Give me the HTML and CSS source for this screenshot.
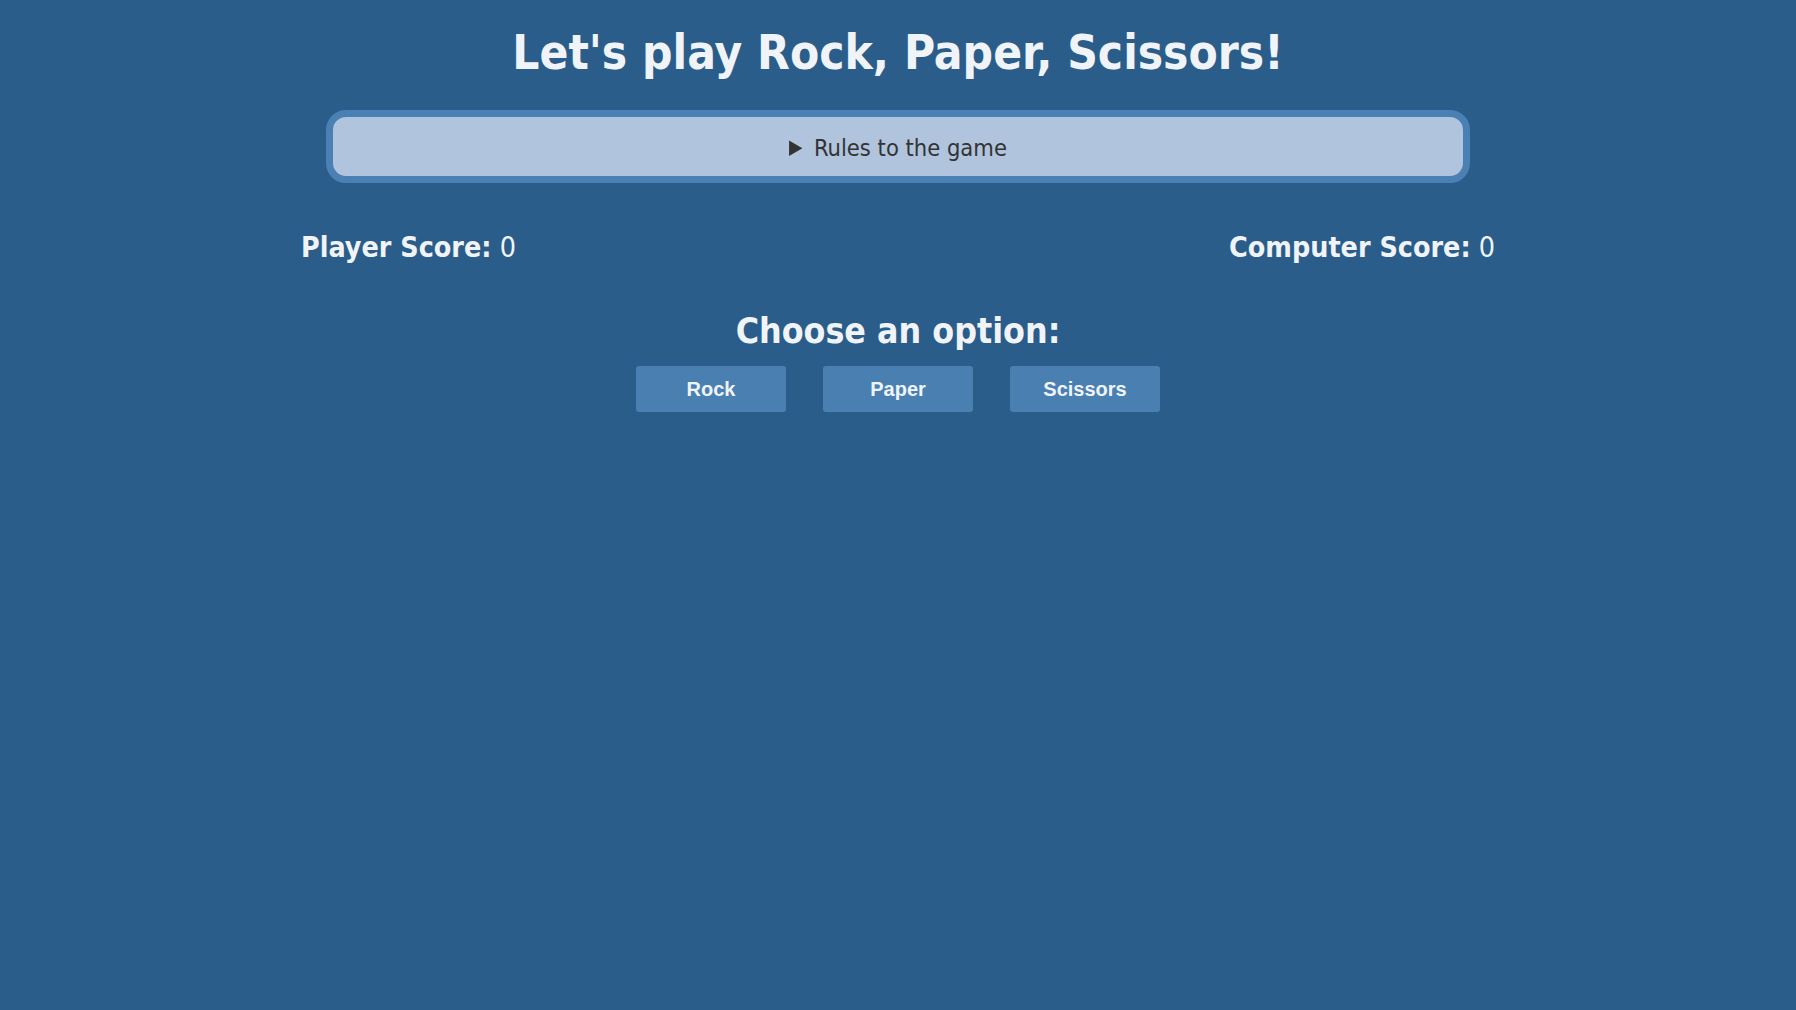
FILE: index.html
```html
<!DOCTYPE html>
<html lang="en">
<head>
<meta charset="utf-8">
<title>Rock, Paper, Scissors</title>
<link rel="stylesheet" href="styles.css">
</head>
<body>
<main class="page">
  <h1 class="title">Let's play Rock, Paper, Scissors!</h1>
  <details class="rules">
    <summary class="rules-summary">Rules to the game</summary>
  </details>
  <section class="scores">
    <p class="score"><strong>Player Score:</strong> 0</p>
    <p class="score"><strong>Computer Score:</strong> 0</p>
  </section>
  <h2 class="choose">Choose an option:</h2>
  <div class="options">
    <button class="option">Rock</button>
    <button class="option">Paper</button>
    <button class="option">Scissors</button>
  </div>
</main>
</body>
</html>
```
FILE: styles.css
```css
html, body {
  margin: 0;
  padding: 0;
}
body {
  background: #2a5d8a;
  color: #f0f4f8;
  font-family: "DejaVu Sans Condensed", "DejaVu Sans", sans-serif;
  min-height: 1010px;
}
.page {
  display: flex;
  flex-direction: column;
  align-items: center;
  padding-top: 24px;
}
.title {
  margin: 0;
  font-size: 47.4px;
  line-height: 58px;
  font-weight: bold;
}
.rules {
  margin-top: 28px;
  width: 1130px;
  background: #b0c4de;
  border: 7px solid #4a80b4;
  border-radius: 20px;
  color: #333333;
}
.rules-summary {
  text-align: center;
  font-size: 23.5px;
  line-height: 59px;
  padding-top: 2px;
  height: 59px;
  box-sizing: border-box;
  cursor: pointer;
}
.scores {
  margin-top: 43px;
  width: 1194px;
  display: flex;
  justify-content: space-between;
}
.score {
  margin: 0;
  font-size: 28.4px;
  line-height: 44px;
}
.choose {
  margin: 39px 0 0;
  font-size: 35.4px;
  line-height: 44px;
  font-weight: bold;
}
.options {
  margin-top: 13px;
  display: flex;
  gap: 37px;
}
.option {
  width: 150px;
  height: 46px;
  border: none;
  border-radius: 3px;
  background: #4a7fb1;
  color: #eef4fa;
  font-family: "Liberation Sans", Arial, sans-serif;
  font-weight: bold;
  font-size: 20px;
  cursor: pointer;
}
```
